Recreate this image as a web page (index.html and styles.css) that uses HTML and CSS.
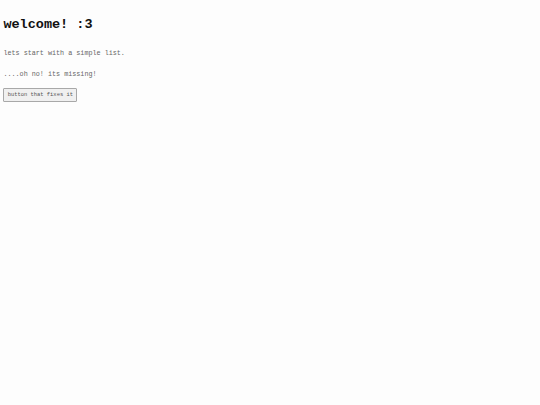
FILE: index.html
```html
<!DOCTYPE html>
<html>
<head>
<meta charset="utf-8">
<link rel="stylesheet" href="styles.css">
</head>
<body>
<h1 class="title">welcome! :3</h1>
<p class="text intro">lets start with a simple list.</p>
<p class="text missing">....oh no! its missing!</p>
<button class="fix-btn">button that fixes it</button>
</body>
</html>
```
FILE: styles.css
```css
html {
  background: #fdfdfd;
}
body {
  margin: 0 3.4px;
  padding-top: 0.1px;
  font-family: "Liberation Mono", monospace;
  font-size: 6.75px;
  color: #666;
}
.title {
  font-size: 13.5px;
  line-height: 15.3px;
  margin: 16.9px 0 18.1px;
  color: #111;
}
.text {
  line-height: 7.65px;
  margin: 0;
}
.intro {
  margin-bottom: 13.35px;
}
.missing {
  margin-bottom: 9px;
}
.fix-btn {
  display: block;
  margin: 0;
  font-family: "Liberation Mono", monospace;
  font-size: 5.45px;
  line-height: 6px;
  padding: 3px 3.3px;
  background: #f0f0f0;
  border: 1px solid #a8a8a8;
  border-radius: 1px;
  color: #555;
}
```
